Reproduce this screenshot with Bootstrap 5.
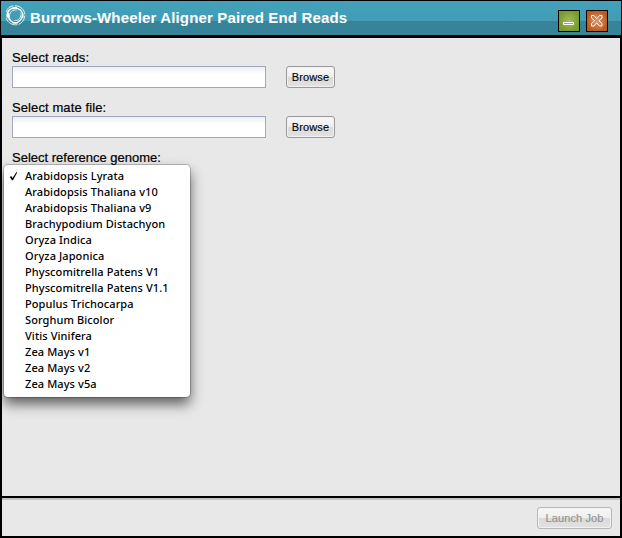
<!DOCTYPE html>
<html lang="en">
<head>
<meta charset="utf-8">
<title>Burrows-Wheeler Aligner Paired End Reads</title>
<link rel="stylesheet" href="https://cdn.jsdelivr.net/npm/bootstrap@5.3.0/dist/css/bootstrap.min.css">
<style>
body{font-family:"Liberation Sans",Arial,sans-serif;color:#000;background:#000}
.app-window{height:538px;width:622px;background:#000;padding:1px 1px 2px}
.title-strip{height:34px;background:linear-gradient(#42a2ba 0,#419cb4 20px,#37849a 20px,#368297 100%);padding:0 13px 0 3px}
.title-strip h1{font-size:15px;line-height:16px;letter-spacing:.15px;color:#fff;margin:0 0 0 4px;white-space:nowrap}
.brand-mark{width:22px;height:22px;margin-top:-6px}
.tool-btn{width:22px;height:22px;border:1px solid #000;border-radius:0;padding:0;margin-top:5px}
.tool-min{background:radial-gradient(#a0b95c 5%,#789a2b 75%)}
.tool-close{background:radial-gradient(#db9463 5%,#b95a20 75%)}
.work-area{height:458px;margin:3px 1px 0;background:#e8e8e8;padding:12px 10px 0}
.field-label{font-size:13px;line-height:16px;height:16px;margin:0;display:block;white-space:nowrap;-webkit-text-stroke:.2px #000}
.label-wide{letter-spacing:.1px}
.file-row{height:22px;margin-bottom:12px;gap:20px}
.file-box{width:254px;height:22px;border:1px solid #a5a7c2;border-radius:0;padding:1px 4px;background:linear-gradient(#e9eff0,#fff 7px)}
.file-box:focus{box-shadow:none}
.soft-btn,.soft-btn:hover,.soft-btn:disabled{height:22px;border:1px solid #999;border-radius:3px;padding:0;font-size:11px;line-height:20px;color:#000;opacity:1;background:linear-gradient(#f8f8f8 0,#eee 49%,#dadada 50%,#e2e2e2 100%);box-shadow:inset 0 0 0 1px #f1f1f1}
.browse{width:49px;letter-spacing:.1px;-webkit-text-stroke:.1px #000}
.footer-strip{height:38px;margin:2px 1px 0;background:#e8e8e8;border-top:2px solid #c3c3c3;padding:0 8px}
.soft-btn.launch{width:75px;color:#949494;border-color:#b7b7b7;letter-spacing:.1px;-webkit-text-stroke:.2px #949494}
.genome-anchor{position:relative}
.genome-menu{position:absolute;left:-8px;top:-1px;width:186px;height:232px;min-width:0;margin:0;padding:3px 0 0;border:0;border-radius:4px;background:#fff;box-shadow:0 0 0 1px rgba(0,0,0,.2),0 7px 13px rgba(0,0,0,.6);font-family:"Noto Sans","Lucida Grande",sans-serif;font-size:11px;color:#000}
.genome-menu li{height:16px;line-height:16px;padding-left:21px;white-space:nowrap;letter-spacing:.09px;font-weight:500}
.tick{position:absolute;left:5px;top:7px;width:9px;height:10px}
</style>
<script src="https://cdn.jsdelivr.net/npm/bootstrap@5.3.0/dist/js/bootstrap.bundle.min.js"></script>
</head>
<body class="overflow-hidden">
<div class="app-window">
  <header class="title-strip d-flex align-items-center">
    <svg class="brand-mark" viewBox="0 0 22 22" fill="none" stroke="#fff" stroke-linecap="round">
      <path d="M2.300 7.500C3.500 4 6 2.200 9 1.800M11.500 1.800C17 2 20.500 6 20.800 10M20.800 12C20.500 16 18 19 15 20.300M13 20.800C8 21.500 3.500 18.500 2.300 14.500" stroke-width="1" stroke-opacity=".85"/>
      <path d="M3.200 13C2.500 7.500 6.500 3.300 12.500 3.500M9 4.500C14.500 2.800 19.500 7.500 18.900 13M18.800 10C18.500 15.500 14.500 19.800 9 18.800M13.500 18.800C8 19.800 3.800 15.500 4.300 9.500" stroke-width="1.400"/>
      <path d="M5.500 13C4.800 8.500 8.500 5.300 12.500 6M17 9C17.800 13 14.500 17.200 10.500 16.700" stroke-width=".8"/>
    </svg>
    <h1 class="fw-bold">Burrows-Wheeler Aligner Paired End Reads</h1>
    <div class="d-flex ms-auto" style="gap:6px">
      <button class="btn tool-btn tool-min d-flex" aria-label="Minimize"><svg width="20" height="20" viewBox="0 0 20 20"><path d="M4.500 11.500h10v2h-10z" fill="none" stroke="#fff"/></svg></button>
      <button class="btn tool-btn tool-close d-flex" aria-label="Close"><svg width="20" height="20" viewBox="0 0 20 20"><path d="M4.500 4.500H7L9.500 7.500H10L12.500 4.500H15V7L12 9.500V10L15 12.500V15H12.500L10 12H9.500L7 15H4.500V12.500L7.500 10V9.500L4.500 7Z" fill="none" stroke="#fff"/></svg></button>
    </div>
  </header>
  <main class="work-area">
    <label class="field-label label-wide" for="reads">Select reads:</label>
    <div class="file-row d-flex"><input id="reads" class="form-control file-box"><button class="btn soft-btn browse">Browse</button></div>
    <label class="field-label label-wide" for="mate">Select mate file:</label>
    <div class="file-row d-flex"><input id="mate" class="form-control file-box"><button class="btn soft-btn browse">Browse</button></div>
    <span class="field-label">Select reference genome:</span>
    <div class="genome-anchor">
      <ul class="genome-menu list-unstyled">
        <li><svg class="tick" viewBox="0 0 9 10"><path d="M.8 5 2.200 4 3.600 6 7.500 0 8.200.5 4 8.300H3Z" fill="#000"/></svg>Arabidopsis Lyrata</li>
        <li>Arabidopsis Thaliana v10</li>
        <li>Arabidopsis Thaliana v9</li>
        <li>Brachypodium Distachyon</li>
        <li>Oryza Indica</li>
        <li>Oryza Japonica</li>
        <li>Physcomitrella Patens V1</li>
        <li>Physcomitrella Patens V1.1</li>
        <li>Populus Trichocarpa</li>
        <li>Sorghum Bicolor</li>
        <li>Vitis Vinifera</li>
        <li>Zea Mays v1</li>
        <li>Zea Mays v2</li>
        <li>Zea Mays v5a</li>
      </ul>
    </div>
  </main>
  <footer class="footer-strip d-flex align-items-center justify-content-end">
    <button class="btn soft-btn launch" disabled>Launch Job</button>
  </footer>
</div>
</body>
</html>
